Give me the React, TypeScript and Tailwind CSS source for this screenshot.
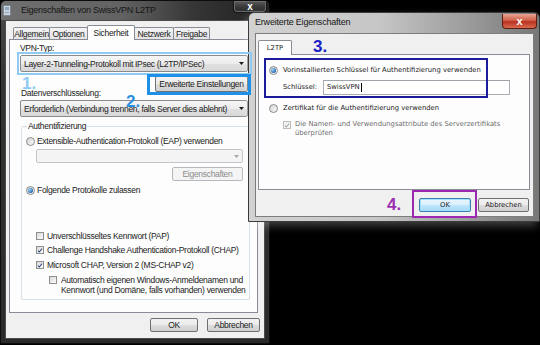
import React from 'react';

const sans = "font-['Liberation_Sans',Arial,sans-serif]";
const tahoma = "font-['DejaVu_Sans',Verdana,sans-serif]";

function Radio({ checked = false }: { checked?: boolean }) {
  return (
    <span className="flex size-[9px] shrink-0 items-center justify-center rounded-full border border-[#8a8a8a] bg-[linear-gradient(135deg,#d4d4d4,#fbfbfb)]">
      {checked && (
        <span className="size-[5px] rounded-full bg-[radial-gradient(circle_at_35%_35%,#9ad8ff,#1d5ea6_75%)]" />
      )}
    </span>
  );
}

function Check({ checked = false, disabled = false }: { checked?: boolean; disabled?: boolean }) {
  return (
    <span
      className={`flex size-[8px] shrink-0 items-center justify-center border ${
        disabled
          ? 'border-[#bcbcbc] bg-[#f4f4f4]'
          : 'border-[#8e8f8f] bg-[linear-gradient(135deg,#d8d8d8,#fdfdfd)]'
      }`}
    >
      {checked && (
        <svg viewBox="0 0 8 8" className="size-[7px]">
          <path
            d="M1.3 4.1 L3 6 L6.7 1.4"
            fill="none"
            stroke={disabled ? '#a4a4a4' : '#34487f'}
            strokeWidth="1.4"
          />
        </svg>
      )}
    </span>
  );
}

function Arrow({ disabled = false }: { disabled?: boolean }) {
  return (
    <svg width="5" height="3" viewBox="0 0 5 3" className="shrink-0">
      <path d="M0 0h5L2.5 3z" fill={disabled ? '#a8a8a8' : '#111'} />
    </svg>
  );
}

function Combo({ text, disabled = false, className = '' }: { text?: string; disabled?: boolean; className?: string }) {
  return (
    <div
      className={`flex items-center rounded-[2px] border pl-[3px] pr-[3px] ${
        disabled
          ? 'border-[#c3c6c9] bg-[#f4f4f4]'
          : 'border-[#8a8a8a] bg-[linear-gradient(#f6f6f6,#ececec_50%,#e0e0e0_51%,#d8d8d8)]'
      } ${className}`}
    >
      <span className="flex-1 truncate">{text}</span>
      <Arrow disabled={disabled} />
    </div>
  );
}

function Btn({
  children,
  disabled = false,
  isDefault = false,
  className = '',
}: {
  children: React.ReactNode;
  disabled?: boolean;
  isDefault?: boolean;
  className?: string;
}) {
  const look = disabled
    ? 'border-[#b5b9bd] bg-[#f4f4f4] text-[#8c8c8c]'
    : isDefault
      ? 'border-[#3c7fb1] bg-[linear-gradient(#eaf6fd,#d9f0fc_50%,#bee6fd_51%,#a7d9f5)] shadow-[inset_0_0_0_1px_#9ee0fd]'
      : 'border-[#707070] bg-[linear-gradient(#f2f2f2,#ebebeb_50%,#dddddd_51%,#cfcfcf)]';
  return (
    <div className={`flex items-center justify-center rounded-[2px] border ${look} ${className}`}>
      {children}
    </div>
  );
}

function Tab({ label, active = false, className = '' }: { label: string; active?: boolean; className?: string }) {
  return (
    <div
      className={`flex items-center justify-center rounded-t-[2px] border border-b-0 border-[#898c95] ${
        active ? 'relative z-10 -mb-px h-[15px] bg-white' : 'h-[12px] bg-[linear-gradient(#f3f3f3,#e3e3e3)]'
      } ${className}`}
    >
      {label}
    </div>
  );
}

function MainWindow() {
  return (
    <div className="absolute left-0 top-0 h-[344px] w-[270px] overflow-hidden rounded-t-[6px] border border-[#0d0d0d] bg-[linear-gradient(180deg,#4a4a4a,#333_25%,#2a2a2a)]">
      <div className="flex h-[19px] items-center bg-[linear-gradient(90deg,#707070,#626262_45%,#363636_72%,#1f1f1f)]">
        <svg width="8" height="11" viewBox="0 0 8 11" className="ml-[2px]">
          <rect x="0.5" y="0.5" width="7" height="10" rx="1" fill="#c9d3dc" stroke="#7d8a96" />
          <rect x="2" y="2" width="4" height="3" fill="#8fa6bb" />
          <rect x="2" y="7" width="4" height="1" fill="#8fa6bb" />
        </svg>
        <span className={`${sans} ml-[10px] text-[9px] tracking-[-0.25px] text-[#151515]`}>
          Eigenschaften von SwissVPN L2TP
        </span>
      </div>
      <div className="absolute right-[2px] top-0 flex h-[12px] w-[34px] items-center justify-center rounded-b-[4px] border border-t-0 border-[#151515] bg-[linear-gradient(#5c5c5c,#3a3a3a_50%,#2b2b2b)] shadow-[inset_0_0_0_1px_#6a6a6a]">
        <span className={`${sans} text-[10px] font-bold leading-none text-white`}>x</span>
      </div>

      <div
        className={`${sans} ml-[4px] h-[319px] w-[260px] border border-[#4c4c4c] bg-[#f0f0f0] text-[8.5px] leading-[10px] tracking-[-0.3px] text-[#1b1b1b]`}
      >
        <div className="flex h-[18px] items-end pl-[7px]">
          <Tab label="Allgemein" className="w-[37px]" />
          <Tab label="Optionen" className="-ml-px w-[39px]" />
          <Tab label="Sicherheit" active className="-ml-px w-[48px]" />
          <Tab label="Netzwerk" className="-ml-px w-[40px]" />
          <Tab label="Freigabe" className="-ml-px w-[37px]" />
        </div>

        <div className="ml-[3px] flex h-[274px] w-[249px] flex-col border border-[#898c95] bg-[#fdfdfd]">
          <div className="ml-[10px] mt-[3px] h-[10px]">VPN-Typ:</div>
          <Combo
            text="Layer-2-Tunneling-Protokoll mit IPsec (L2TP/IPSec)"
            className="ml-[10px] mt-[2px] h-[17px] w-[228px]"
          />
          <div className="mr-[9px] mt-[4px] flex justify-end">
            <Btn className="h-[16px] w-[93px]">Erweiterte Einstellungen</Btn>
          </div>
          <div className="ml-[11px] mt-[-4px] h-[10px]">Datenverschlüsselung:</div>
          <Combo
            text="Erforderlich (Verbindung trennen, falls Server dies ablehnt)"
            className="ml-[10px] mt-[2px] h-[17px] w-[228px]"
          />

          <fieldset className="ml-[11px] mt-[4px] flex w-[229px] flex-col rounded-[2px] border border-[#d5dfe5] pb-[4px]">
            <legend className="ml-[5px] px-[1px] leading-[10px]">Authentifizierung</legend>
            <div className="mt-[5px] flex h-[10px] items-center gap-[2px] pl-[4px]">
              <Radio />
              <span>Extensible-Authentication-Protokoll (EAP) verwenden</span>
            </div>
            <Combo disabled className="ml-[14px] mt-[3px] h-[14px] w-[207px]" />
            <div className="mr-[6px] mt-[4px] flex justify-end">
              <Btn disabled className="h-[14px] w-[71px]">
                Eigenschaften
              </Btn>
            </div>
            <div className="mt-[4px] flex h-[10px] items-center gap-[2px] pl-[4px]">
              <Radio checked />
              <span>Folgende Protokolle zulassen</span>
            </div>
            <div className="mt-[36px] flex h-[10px] items-center gap-[3px] pl-[14px]">
              <Check />
              <span>Unverschlüsseltes Kennwort (PAP)</span>
            </div>
            <div className="mt-[4px] flex h-[10px] items-center gap-[3px] pl-[14px]">
              <Check checked />
              <span>Challenge Handshake Authentication-Protokoll (CHAP)</span>
            </div>
            <div className="mt-[5px] flex h-[10px] items-center gap-[3px] pl-[14px]">
              <Check checked />
              <span>Microsoft CHAP, Version 2 (MS-CHAP v2)</span>
            </div>
            <div className="mt-[5px] flex items-start gap-[4px] pl-[27px]">
              <span className="mt-[1px]">
                <Check />
              </span>
              <span>
                Automatisch eigenen Windows-Anmeldenamen und
                <br />
                Kennwort (und Domäne, falls vorhanden) verwenden
              </span>
            </div>
          </fieldset>
        </div>

        <div className="mt-[5px] flex justify-end gap-[9px] pr-[4px]">
          <Btn className="h-[14px] w-[48px]">OK</Btn>
          <Btn className="h-[14px] w-[53px]">Abbrechen</Btn>
        </div>
      </div>
    </div>
  );
}

function AdvancedDialog() {
  return (
    <div className="absolute left-[248px] top-[12px] h-[210px] w-[292px] rounded-t-[6px] border border-[#3b3b3b] bg-[linear-gradient(90deg,#d2d2d2,#c6c6c6_45%,#9c9c9c_75%,#777)] shadow-[-3px_4px_8px_rgba(255,255,255,0.25)]">
      <div className="flex h-[20px] items-center">
        <span className={`${sans} ml-[6px] text-[9px] tracking-[-0.2px] text-[#151515]`}>
          Erweiterte Eigenschaften
        </span>
      </div>
      <div className="absolute right-[2px] top-[1px] flex h-[15px] w-[35px] items-center justify-center rounded-b-[4px] border border-t-0 border-[#5b1d12] bg-[linear-gradient(#e9a595,#d0614b_45%,#b8321f_55%,#d86a4e)]">
        <span className={`${sans} text-[11px] font-bold leading-none text-white`}>x</span>
      </div>

      <div
        className={`${tahoma} ml-[6px] h-[184px] w-[279px] border border-[#7d7d7d] bg-[#f0f0f0] text-[6.8px] leading-[9px] text-[#1b1b1b]`}
      >
        <div className="flex h-[20px] items-end pl-[2px]">
          <Tab label="L2TP" active className="w-[34px]" />
        </div>
        <div className="ml-[2px] flex h-[136px] w-[272px] flex-col border border-[#898c95] bg-[#fdfdfd]">
          <div className="mt-[10px] flex h-[10px] items-center gap-[5px] pl-[10px]">
            <Radio checked />
            <span>Vorinstallierten Schlüssel für Authentifizierung verwenden</span>
          </div>
          <div className="mt-[5px] flex h-[15px] items-center pl-[24px]">
            <span className="w-[40px]">Schlüssel:</span>
            <div className="flex h-[15px] w-[187px] items-center border border-[#abadb3] border-t-[#a0a3aa] bg-white px-[3px]">
              <span>SwissVPN</span>
              <span className="ml-px h-[9px] w-px bg-black" />
            </div>
          </div>
          <div className="mt-[8px] flex h-[10px] items-center gap-[5px] pl-[10px]">
            <Radio />
            <span>Zertifikat für die Authentifizierung verwenden</span>
          </div>
          <div className="mt-[7px] flex items-start gap-[4px] pl-[24px] text-[#6d6d6d]">
            <span className="mt-[1px]">
              <Check checked disabled />
            </span>
            <span>
              Die Namen- und Verwendungsattribute des Serverzertifikats
              <br />
              überprüfen
            </span>
          </div>
        </div>
        <div className="mt-[8px] flex justify-end gap-[7px] pr-[4px]">
          <Btn isDefault className="h-[14px] w-[52px]">
            OK
          </Btn>
          <Btn className="h-[14px] w-[51px]">Abbrechen</Btn>
        </div>
      </div>
    </div>
  );
}

export default function App() {
  return (
    <div className="relative h-[345px] w-[540px] overflow-hidden bg-black">
      <MainWindow />
      <AdvancedDialog />

      {/* step markers drawn over the screenshot */}
      <div className="pointer-events-none absolute left-[17px] top-[52px] h-[23px] w-[235px] border-2 border-[#8fcaf2]" />
      <div className="pointer-events-none absolute left-[147px] top-[74px] h-[21px] w-[104px] border-[3px] border-[#1e90e8]" />
      <div className="pointer-events-none absolute left-[264px] top-[58px] h-[40px] w-[224px] border-2 border-[#1c1c9c]" />
      <div className="pointer-events-none absolute left-[412px] top-[190px] h-[28px] w-[65px] border-2 border-[#9c27b0]" />
      <span className={`${sans} absolute left-[22px] top-[75px] text-[17px] font-bold leading-none text-[#8ccaf3]`}>1.</span>
      <span className={`${sans} absolute left-[126px] top-[93px] text-[17px] font-bold leading-none text-[#2b8fe0]`}>2.</span>
      <span className={`${sans} absolute left-[313px] top-[38px] text-[17px] font-bold leading-none text-[#1d1dc4]`}>3.</span>
      <span className={`${sans} absolute left-[387px] top-[196px] text-[17px] font-bold leading-none text-[#9b30b0]`}>4.</span>
    </div>
  );
}
